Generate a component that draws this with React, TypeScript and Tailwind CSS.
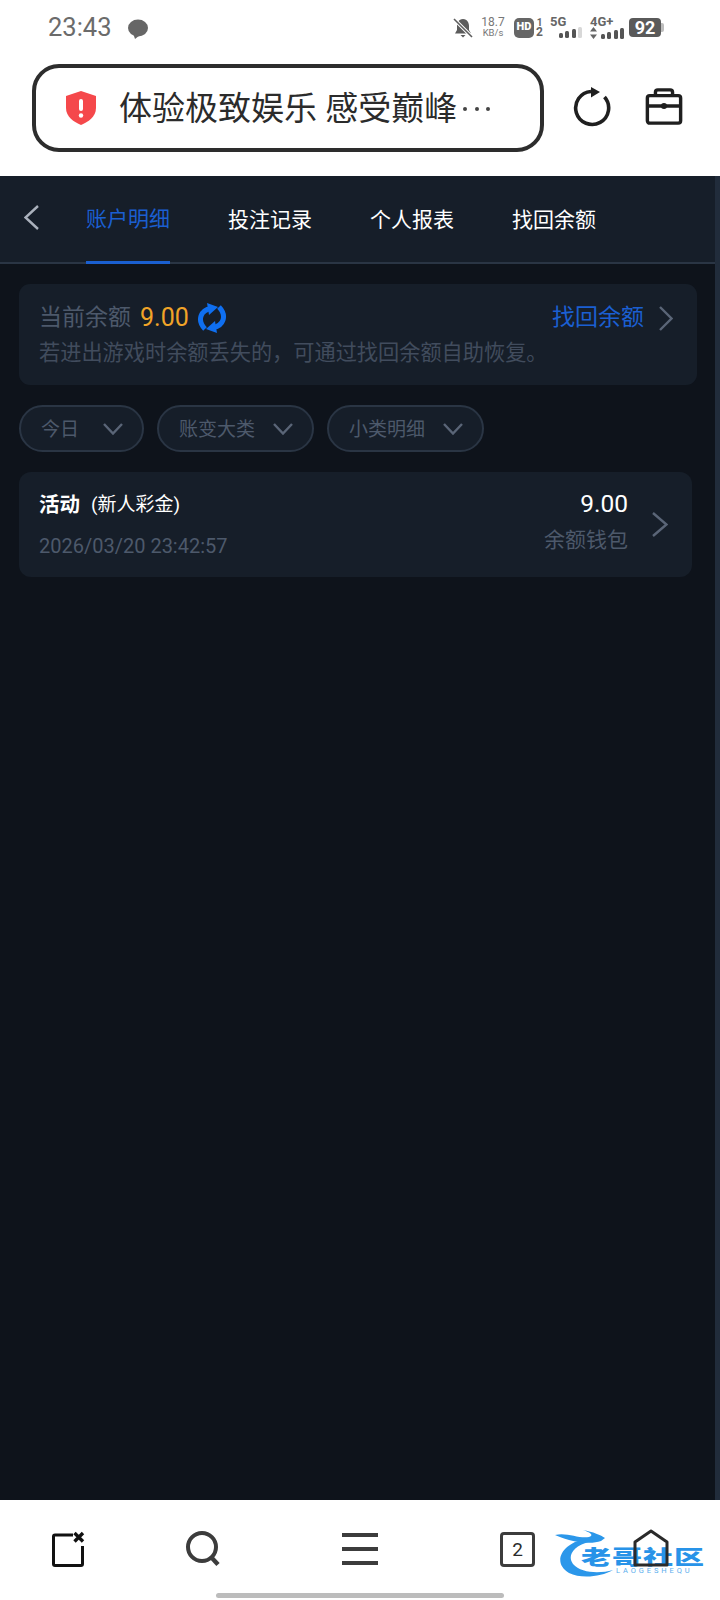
const cjk = "font-['Roboto','Noto_Sans_CJK_SC',sans-serif]"

// thin chevron, drawn to the exact box seen in the screenshot
function Chevron({ dir, w, h, color, sw = 2.4 }: { dir: "left" | "right" | "down"; w: number; h: number; color: string; sw?: number }) {
  const d =
    dir === "left"
      ? `M${w - 1} 1 L1.500 ${h / 2} L${w - 1} ${h - 1}`
      : dir === "right"
        ? `M1 1 L${w - 1.5} ${h / 2} L1 ${h - 1}`
        : `M1 1 L${w / 2} ${h - 1.5} L${w - 1} 1`
  return (
    <svg width={w} height={h} viewBox={`0 0 ${w} ${h}`} fill="none" className="shrink-0">
      <path d={d} stroke={color} strokeWidth={sw} />
    </svg>
  )
}

function Bars({ on, total }: { on: number; total: number }) {
  const heights = [5, 7, 9, 11]
  return (
    <div className="flex items-end gap-[2.500px]">
      {heights.slice(0, total).map((h, i) => (
        <span
          key={i}
          className={i < on ? "w-[4px] rounded-[1.500px] bg-[#555]" : "w-[4px] rounded-[1.500px] bg-[#d8d8d8]"}
          style={{ height: h }}
        />
      ))}
    </div>
  )
}

function StatusBar() {
  return (
    <div className="flex h-[64px] items-center pl-[48px] pr-[56px] pb-[9px]">
      <span className="text-[25.500px] leading-none text-[#6b6b6b] font-['Roboto',sans-serif]">23:43</span>
      <svg className="ml-[16px] mt-[2px]" width="20" height="20" viewBox="0 0 20 20">
        <ellipse cx="10" cy="9" rx="10" ry="8.500" fill="#666" />
        <path d="M5 14 L7 20 L12 16 Z" fill="#666" />
      </svg>
      <div className="ml-auto flex items-center">
        <svg width="20" height="20" viewBox="0 0 20 20">
          <path d="M10 1 C5.500 1 4 5 4 8 V12 L2 15.500 H18 L16 12 V8 C16 5 14.500 1 10 1 Z" fill="#5c5c5c" />
          <path d="M7.500 17 H12.500 L10 19.500 Z" fill="#5c5c5c" />
          <path d="M1 1 L19 19" stroke="#fff" strokeWidth="3.500" />
          <path d="M1 1 L19 19" stroke="#5c5c5c" strokeWidth="1.600" />
        </svg>
        <div className="ml-[7px] flex w-[26px] flex-col items-center leading-none text-[#777] font-['Roboto',sans-serif]">
          <span className="text-[12px] leading-[11px]">18.7</span>
          <span className="text-[9.500px] leading-[10px]">KB/s</span>
        </div>
        <div className="ml-[8px] flex h-[20px] w-[20px] items-center justify-center rounded-[5px] bg-[#666] text-[11px] font-black text-white font-['Roboto',sans-serif]">
          HD
        </div>
        <div className="ml-[1px] flex w-[9px] flex-col items-center text-[#666] font-bold font-['Roboto',sans-serif]">
          <span className="text-[10px] leading-[9px]">1</span>
          <span className="text-[12px] leading-[11px]">2</span>
        </div>
        <div className="ml-[6px] flex w-[32px] flex-col">
          <span className="text-[13px] font-bold leading-[9px] text-[#666] font-['Roboto',sans-serif]">5G</span>
          <div className="mt-[1px] self-end">
            <Bars on={3} total={4} />
          </div>
        </div>
        <div className="ml-[8px] flex w-[34px] flex-col">
          <span className="text-[13px] font-bold leading-[9px] text-[#666] font-['Roboto',sans-serif]">4G+</span>
          <div className="mt-[1px] flex items-end justify-between">
            <svg width="7" height="12" viewBox="0 0 7 12">
              <path d="M3.500 0 L7 4.500 H0 Z M0 7.500 H7 L3.500 12 Z" fill="#666" />
            </svg>
            <Bars on={4} total={4} />
          </div>
        </div>
        <div className="ml-[5px] flex h-[19px] w-[32px] items-center justify-center rounded-[4px] bg-[#5a5a5a] text-[18px] font-bold text-white font-['Roboto',sans-serif]">
          92
        </div>
        <span className="h-[9px] w-[3px] rounded-r-[2px] bg-[#bdbdbd]" />
      </div>
    </div>
  )
}

function AddressRow() {
  return (
    <div className="flex h-[112px] items-start pl-[32px]">
      <div className="flex h-[88px] w-[512px] items-center rounded-[27px] border-[4px] border-[#2d2d2d] pl-[30px]">
        <svg width="30" height="34" viewBox="0 0 30 34">
          <path d="M15 0 L30 5 V17 C30 26 22 31 15 34 C8 31 0 26 0 17 V5 Z" fill="#f5484b" />
          <rect x="13" y="8" width="4" height="12" rx="2" fill="#fff" />
          <circle cx="15" cy="24.500" r="2.200" fill="#fff" />
        </svg>
        <span className="ml-[23px] whitespace-nowrap text-[33px] leading-none text-[#2b2b2b]">
          体验极致娱乐 感受巅峰
        </span>
        <span className="ml-[6px] flex gap-[7.500px] pt-[2px]">
          <i className="h-[4px] w-[4px] rounded-full bg-[#444]" />
          <i className="h-[4px] w-[4px] rounded-full bg-[#444]" />
          <i className="h-[4px] w-[4px] rounded-full bg-[#444]" />
        </span>
      </div>
      <svg className="ml-[28px] mt-[23px]" width="40" height="40" viewBox="0 0 40 40" fill="none">
        <path d="M19 4.500 A16.500 16.500 0 1 0 32.500 10" stroke="#1f1f1f" strokeWidth="3.600" />
        <path d="M19 0 L28 5 L19 10.500 Z" fill="#1f1f1f" />
      </svg>
      <svg className="ml-[33px] mt-[24px]" width="38" height="38" viewBox="0 0 40 40" fill="none" stroke="#1f1f1f" strokeWidth="3.600">
        <path d="M11 8 V4.500 A2.500 2.500 0 0 1 13.500 2 H26.500 A2.500 2.500 0 0 1 29 4.500 V8" />
        <rect x="2.500" y="8" width="35" height="29" rx="2.500" />
        <path d="M2.500 19 H37.500" />
        <circle cx="20" cy="19" r="3.200" fill="#1f1f1f" stroke="none" />
      </svg>
    </div>
  )
}

function Tabs() {
  const tabs = ["账户明细", "投注记录", "个人报表", "找回余额"]
  return (
    <div className="flex h-[88px] shrink-0 border-b-2 border-[#2a3544] bg-[#161e29] pl-[24px]">
      <div className="flex w-[62px] items-center pb-[3px]">
        <Chevron dir="left" w={15} h={25} color="#aab1bc" />
      </div>
      <div className="flex gap-[58px]">
        {tabs.map((t, i) => (
          <div
            key={t}
            className={
              i === 0
                ? "-mb-[2px] flex w-[84px] items-center border-b-[3px] border-[#1a5fd0] pt-[3px] text-[21px] text-[#1b5fd1]"
                : "flex w-[84px] items-center pt-[4px] text-[21px] text-white"
            }
          >
            <span className="whitespace-nowrap">{t}</span>
          </div>
        ))}
      </div>
    </div>
  )
}

function SyncIcon() {
  return (
    <svg width="30" height="30" viewBox="0 0 30 30" fill="none">
      <path d="M14 5.500 C4 7 -0.500 17 8 26" stroke="#0f6ff0" strokeWidth="5" />
      <path d="M10 0 L21 4 L12 12 Z" fill="#0f6ff0" />
      <g transform="rotate(180 15 15)">
        <path d="M14 5.500 C4 7 -0.500 17 8 26" stroke="#0f6ff0" strokeWidth="5" />
        <path d="M10 0 L21 4 L12 12 Z" fill="#0f6ff0" />
      </g>
    </svg>
  )
}

function BalanceCard() {
  return (
    <div className="ml-[19px] mt-[20px] h-[101px] w-[678px] rounded-[11px] bg-[#161e29] pl-[20px] pr-[24px] pt-[17px]">
      <div className="flex h-[34px] items-center">
        <span className="text-[23px] text-[#4d596b]">当前余额</span>
        <span className="ml-[9px] text-[25px] text-[#f0a428]">9.00</span>
        <span className="ml-[8px] flex">
          <SyncIcon />
        </span>
        <span className="ml-auto text-[23px] text-[#1b5fd1]">找回余额</span>
        <span className="ml-[15px]">
          <Chevron dir="right" w={14} h={25} color="#5a6577" />
        </span>
      </div>
      <p className="mt-[3px] whitespace-nowrap text-[21.200px] leading-[30px] text-[#414c5d]">
        若进出游戏时余额丢失的，可通过找回余额自助恢复。
      </p>
    </div>
  )
}

function Pill({ label, width }: { label: string; width: string }) {
  return (
    <div className={`flex h-[47px] items-center justify-between rounded-full border-2 border-[#2a3544] bg-[#161e29] pl-[20px] pr-[19px] ${width}`}>
      <span className="pt-[3px] text-[19px] text-[#4d596b]">{label}</span>
      <Chevron dir="down" w={20} h={12} color="#5a6577" />
    </div>
  )
}

function Filters() {
  return (
    <div className="ml-[19px] mt-[20px] flex gap-[13px]">
      <Pill label="今日" width="w-[125px]" />
      <Pill label="账变大类" width="w-[157px]" />
      <Pill label="小类明细" width="w-[157px]" />
    </div>
  )
}

function RecordRow() {
  return (
    <div className="ml-[19px] mt-[20px] flex h-[105px] w-[673px] items-center rounded-[12px] bg-[#161e29] pl-[20px] pr-[24px]">
      <div className="flex flex-col">
        <div className="flex h-[30px] items-center pt-[5px] text-white">
          <span className="text-[20.500px] font-bold">活动</span>
          <span className="ml-[11px] text-[19px]">(新人彩金)</span>
        </div>
        <span className="mt-[13px] text-[20px] leading-[30px] text-[#4d596b]">2026/03/20 23:42:57</span>
      </div>
      <div className="ml-auto flex flex-col items-end pb-[6px]">
        <span className="text-[24.500px] leading-[30px] text-white">9.00</span>
        <span className="mt-[6px] text-[21px] leading-[30px] text-[#4d596b]">余额钱包</span>
      </div>
      <span className="ml-[24px]">
        <Chevron dir="right" w={16} h={25} color="#5a6577" />
      </span>
    </div>
  )
}

function Watermark() {
  return (
    <div className="absolute left-[555px] top-[30px] h-[50px] w-[152px]">
      <svg className="absolute left-0 top-0" width="82" height="50" viewBox="0 0 82 50" fill="none">
        <path d="M30 9 C8 13 -4 32 14 43 C26 49 46 47 58 40 C44 44 26 43 18 34 C12 26 18 16 34 12 Z" fill="#2b97ea" />
        <path d="M0 5 C12 2 24 9 34 7 C40 5 34 2 28 0 C38 2 46 5 50 8 L46 11 C38 14 26 13 14 10 C8 8 4 7 0 5 Z" fill="#2b97ea" />
      </svg>
      <span className="absolute left-[26px] top-[13px] origin-center scale-y-[0.68] whitespace-nowrap text-[30px] font-black leading-[26px] tracking-[1px] text-[#2893e8] font-['Noto_Sans_CJK_SC',sans-serif]">
        老哥社区
      </span>
      <span className="absolute left-[61px] top-[37px] whitespace-nowrap text-[7.500px] leading-[8px] tracking-[2.900px] text-[#5aaeee] font-['Roboto',sans-serif]">
        LAOGESHEQU
      </span>
    </div>
  )
}

function BottomBar() {
  return (
    <div className="relative flex h-[100px] shrink-0 flex-col bg-white">
      <Watermark />
      <div className="relative flex h-[93px] items-start pl-[50px] pt-[31px]">
        <svg width="36" height="36" viewBox="0 0 36 36" fill="none">
          <path d="M23 4 H5 A1.500 1.500 0 0 0 3.500 5.500 V33 A1.500 1.500 0 0 0 5 34.500 H31 A1.500 1.500 0 0 0 32.500 33 V15" stroke="#111" strokeWidth="3" />
          <path d="M24.500 2 L33 10.500 M33 2 L24.500 10.500" stroke="#111" strokeWidth="3.400" />
        </svg>
        <svg className="ml-[99px]" width="36" height="36" viewBox="0 0 36 36" fill="none" stroke="#3c3c3c">
          <circle cx="17" cy="16" r="14" strokeWidth="4" />
          <path d="M26 26 L33 33.500" strokeWidth="4.400" />
        </svg>
        <div className="ml-[121px] flex w-[36px] flex-col gap-[10px] pt-[2px]">
          <i className="h-[4px] bg-[#3c3c3c]" />
          <i className="h-[4px] bg-[#3c3c3c]" />
          <i className="h-[4px] bg-[#3c3c3c]" />
        </div>
        <div className="ml-[122px] mt-[1px] flex h-[35px] w-[35px] items-center justify-center rounded-[4px] border-[3.500px] border-[#3c3c3c] text-[19px] leading-none text-[#2b2b2b] font-['Roboto',sans-serif]">
          2
        </div>
        <svg className="ml-[98px] -mt-[2px]" width="36" height="38" viewBox="0 0 36 38" fill="none">
          <path d="M2 36 V13 L18 2 L34 13 V36 H2 Z" stroke="#2a2a2a" strokeWidth="3" strokeLinejoin="round" />
        </svg>
      </div>
      <div className="mx-auto h-[5px] w-[288px] rounded-full bg-[#bcbcbc]" />
    </div>
  )
}

export default function App() {
  return (
    <div className={`flex h-[1600px] w-[720px] flex-col overflow-hidden bg-white ${cjk}`}>
      <StatusBar />
      <AddressRow />
      <div className="flex min-h-0 flex-1">
        <div className="flex min-w-0 flex-1 flex-col bg-[#0e131b]">
          <Tabs />
          <BalanceCard />
          <Filters />
          <RecordRow />
        </div>
        <div className="w-[5px] bg-[#212c3b]" />
      </div>
      <BottomBar />
    </div>
  )
}
